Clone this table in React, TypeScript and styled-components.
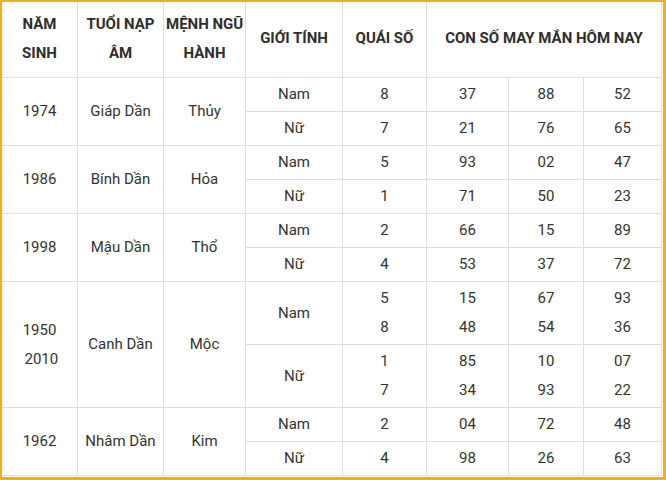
import React from "react";
import styled, { createGlobalStyle } from "styled-components";

const GlobalStyle = createGlobalStyle`
  html, body {
    margin: 0;
    padding: 0;
    background: #ffffff;
  }
  body {
    font-family: Roboto, "Noto Sans", "Liberation Sans", sans-serif;
  }
`;

const Frame = styled.div`
  box-sizing: border-box;
  width: 666px;
  height: 480px;
  border-style: solid;
  border-color: #f1ae1f;
  border-width: 2px 3px 3px 2px;
  padding: 0 1px 1px 0;
  background: #ffffff;
  overflow: hidden;
`;

const Table = styled.table`
  width: 660px;
  table-layout: fixed;
  border-collapse: separate;
  border-spacing: 0;
  font-family: Roboto, "Noto Sans", "Liberation Sans", sans-serif;
  font-size: 15px;
  color: #333333;
`;

const Th = styled.th`
  box-sizing: border-box;
  padding: 8px 2px 10px;
  font-weight: 700;
  line-height: 28.5px;
  text-align: center;
  vertical-align: middle;
  color: #2e2e2e;
  border-right: 1px solid #dedede;
  border-bottom: 1px solid #dedede;
  white-space: nowrap;
`;

const Td = styled.td`
  box-sizing: border-box;
  padding: 2px 2px;
  line-height: 29px;
  text-align: center;
  vertical-align: middle;
  font-weight: 400;
  border-right: 1px solid #dedede;
  border-bottom: 1px solid #dedede;
  white-space: nowrap;
`;

const widths = [76, 86, 82, 97, 84, 82, 75, 78];

type Sub = { gender: string; quai: string[]; nums: string[][] };
type Group = { years: string[]; napAm: string; menh: string; rows: Sub[] };

const data: Group[] = [
  {
    years: ["1974"],
    napAm: "Giáp Dần",
    menh: "Thủy",
    rows: [
      { gender: "Nam", quai: ["8"], nums: [["37"], ["88"], ["52"]] },
      { gender: "Nữ", quai: ["7"], nums: [["21"], ["76"], ["65"]] },
    ],
  },
  {
    years: ["1986"],
    napAm: "Bính Dần",
    menh: "Hỏa",
    rows: [
      { gender: "Nam", quai: ["5"], nums: [["93"], ["02"], ["47"]] },
      { gender: "Nữ", quai: ["1"], nums: [["71"], ["50"], ["23"]] },
    ],
  },
  {
    years: ["1998"],
    napAm: "Mậu Dần",
    menh: "Thổ",
    rows: [
      { gender: "Nam", quai: ["2"], nums: [["66"], ["15"], ["89"]] },
      { gender: "Nữ", quai: ["4"], nums: [["53"], ["37"], ["72"]] },
    ],
  },
  {
    years: ["1950", "\u00a02010"],
    napAm: "Canh Dần",
    menh: "Mộc",
    rows: [
      {
        gender: "Nam",
        quai: ["5", "8"],
        nums: [
          ["15", "48"],
          ["67", "54"],
          ["93", "36"],
        ],
      },
      {
        gender: "Nữ",
        quai: ["1", "7"],
        nums: [
          ["85", "34"],
          ["10", "93"],
          ["07", "22"],
        ],
      },
    ],
  },
  {
    years: ["1962"],
    napAm: "Nhâm Dần",
    menh: "Kim",
    rows: [
      { gender: "Nam", quai: ["2"], nums: [["04"], ["72"], ["48"]] },
      { gender: "Nữ", quai: ["4"], nums: [["98"], ["26"], ["63"]] },
    ],
  },
];

const Lines: React.FC<{ items: string[] }> = ({ items }) => (
  <>
    {items.map((t, i) => (
      <React.Fragment key={i}>
        {i > 0 && <br />}
        {t}
      </React.Fragment>
    ))}
  </>
);

export default function App() {
  return (
    <>
      <GlobalStyle />
      <Frame>
        <Table>
          <colgroup>
            {widths.map((w, i) => (
              <col key={i} style={{ width: w }} />
            ))}
          </colgroup>
          <thead>
            <tr>
              <Th>
                NĂM
                <br />
                SINH
              </Th>
              <Th>
                TUỔI NẠP
                <br />
                ÂM
              </Th>
              <Th>
                MỆNH NGŨ
                <br />
                HÀNH
              </Th>
              <Th>GIỚI TÍNH</Th>
              <Th>QUÁI SỐ</Th>
              <Th colSpan={3}>CON SỐ MAY MẮN HÔM NAY</Th>
            </tr>
          </thead>
          <tbody>
            {data.map((g, gi) =>
              g.rows.map((r, ri) => (
                <tr key={`${gi}-${ri}`}>
                  {ri === 0 && (
                    <>
                      <Td rowSpan={g.rows.length}>
                        <Lines items={g.years} />
                      </Td>
                      <Td rowSpan={g.rows.length}>{g.napAm}</Td>
                      <Td rowSpan={g.rows.length}>{g.menh}</Td>
                    </>
                  )}
                  <Td>{r.gender}</Td>
                  <Td>
                    <Lines items={r.quai} />
                  </Td>
                  {r.nums.map((n, ni) => (
                    <Td key={ni}>
                      <Lines items={n} />
                    </Td>
                  ))}
                </tr>
              ))
            )}
          </tbody>
        </Table>
      </Frame>
    </>
  );
}
